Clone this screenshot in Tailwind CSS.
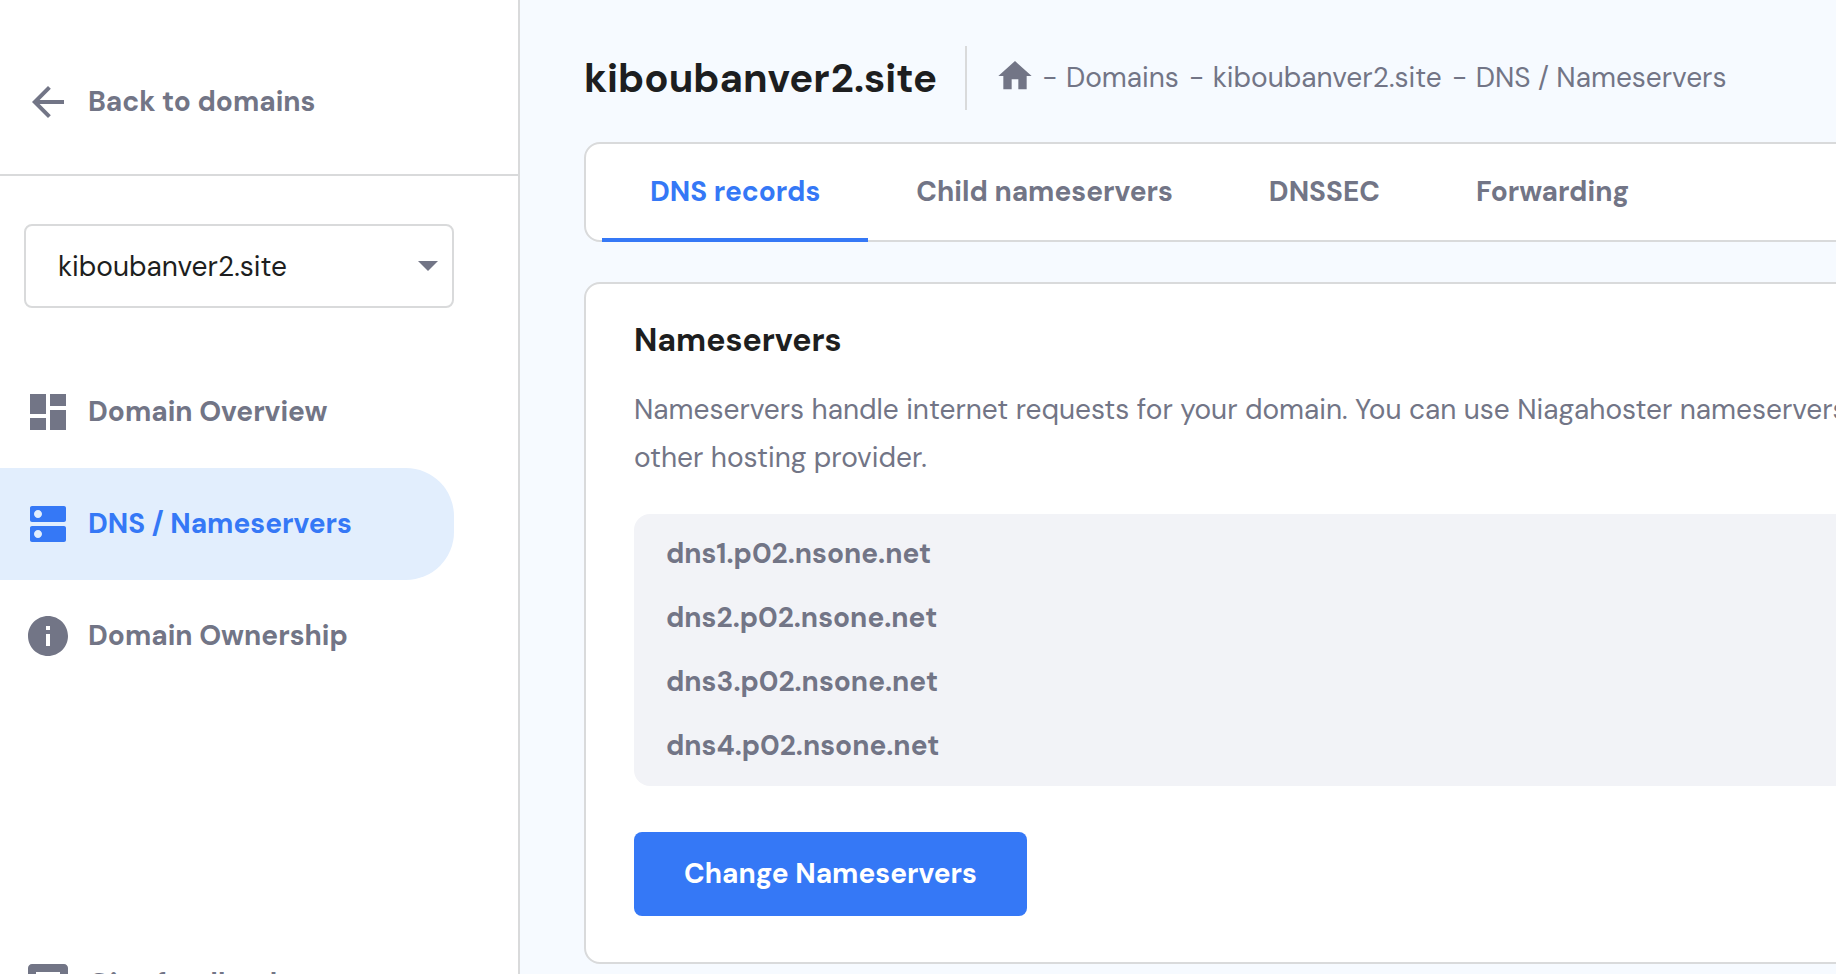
<!DOCTYPE html>
<html lang="en"><head><meta charset="utf-8"><title>DNS / Nameservers</title>
<script src="https://cdn.jsdelivr.net/npm/@tailwindcss/browser@4"></script></head>
<body class="h-[974px] w-[1836px] overflow-hidden bg-[#f6faff] text-[28px] leading-[48px] whitespace-nowrap text-[#727586]" style="font-family:'DM Sans','Open Sans','Noto Sans',sans-serif">
<div class="flex h-full">
<aside class="flex h-full w-[520px] shrink-0 flex-col overflow-hidden border-r-2 border-[#d9dadb] bg-white font-bold">
  <a class="flex h-[176px] shrink-0 items-center gap-4 border-b-2 border-[#d9dadb] pt-[30px] pl-6">
    <svg class="size-12" viewBox="0 0 24 24" fill="currentColor"><path d="M20 11H7.83l5.59-5.59L12 4l-8 8 8 8 1.41-1.41L7.83 13H20v-2z"/></svg>
    <span>Back to domains</span></a>
  <div class="mt-12 ml-6 flex h-[84px] w-[430px] shrink-0 items-center justify-between rounded-lg border-2 border-[#d9dadb] pr-[14px] pl-8 font-normal text-[#1d1e20]">
    <span class="pt-0.5">kiboubanver2.site</span>
    <svg class="h-[10px] w-5 text-[#727586]" viewBox="0 0 20 10" fill="currentColor"><path d="M0 0h20L10 10z"/></svg></div>
  <nav class="mt-12 w-[454px] shrink-0">
    <a class="flex h-28 items-center gap-4 pl-6"><svg class="size-12" viewBox="0 0 24 24" fill="currentColor"><path d="M3 13h8V3H3v10zm0 8h8v-6H3v6zm10 0h8V11h-8v10zm0-18v6h8V3h-8z"/></svg><span>Domain Overview</span></a>
    <a class="flex h-28 items-center gap-4 rounded-r-[48px] bg-[#e2eefd] pl-6 text-[#3578f6]"><svg class="size-12" viewBox="0 0 24 24" fill="currentColor"><path d="M20 13H4c-.55 0-1 .45-1 1v6c0 .55.45 1 1 1h16c.55 0 1-.45 1-1v-6c0-.55-.45-1-1-1zM7 19c-1.100 0-2-.9-2-2s.9-2 2-2 2 .9 2 2-.9 2-2 2zM20 3H4c-.55 0-1 .45-1 1v6c0 .55.45 1 1 1h16c.55 0 1-.45 1-1V4c0-.55-.45-1-1-1zM7 9c-1.100 0-2-.9-2-2s.9-2 2-2 2 .9 2 2-.9 2-2 2z"/></svg><span>DNS / Nameservers</span></a>
    <a class="flex h-28 items-center gap-4 pl-6"><svg class="size-12" viewBox="0 0 24 24" fill="currentColor"><path d="M12 2C6.480 2 2 6.480 2 12s4.480 10 10 10 10-4.480 10-10S17.520 2 12 2zm1 15h-2v-6h2v6zm0-8h-2V7h2v2z"/></svg><span>Domain Ownership</span></a>
  </nav>
  <a class="mt-[236px] flex h-28 shrink-0 items-center gap-4 pl-6"><svg class="size-12" viewBox="0 0 24 24" fill="currentColor"><path fill-rule="evenodd" d="M20 2H4c-1.100 0-2 .9-2 2v18l4-4h14c1.100 0 2-.9 2-2V4c0-1.100-.9-2-2-2zM6 6h12v8H6z"/></svg><span>Give feedback</span></a>
</aside>
<main class="w-[1316px] shrink-0 overflow-hidden pt-[46px] pl-16">
  <header class="flex h-16 items-center">
    <h1 class="w-[381px] text-[40px] font-bold text-[#1d1e20]">kiboubanver2.site</h1>
    <div class="h-16 w-0.5 bg-[#d9dadb]"></div>
    <nav class="ml-7 flex items-center gap-[10.3px]">
      <svg class="-mt-1 -mr-[3px] size-10" viewBox="0 0 24 24" fill="currentColor"><path d="M10 20v-6h4v6h5v-8h3L12 3 2 12h3v8z"/></svg>
      <span><span class="mr-px">- </span>Domains</span>
      <span><span class="mr-px">- </span>kiboubanver2.site</span>
      <span><span class="mr-px">- </span>DNS / Nameservers</span>
    </nav>
  </header>
  <div class="mt-8 flex h-[100px] w-[1600px] rounded-2xl border-2 border-[#d9dadb] bg-white pl-4 font-bold">
    <a class="-mb-0.5 flex items-center border-b-4 border-[#3578f6] px-12 pt-0.5 text-[#3578f6]">DNS records</a>
    <a class="flex items-center px-12">Child nameservers</a>
    <a class="flex items-center px-12">DNSSEC</a>
    <a class="flex items-center px-12">Forwarding</a>
  </div>
  <section class="mt-10 h-[682px] w-[1600px] rounded-2xl border-2 border-[#d9dadb] bg-white px-12 pt-8">
    <h2 class="text-[32px] font-bold text-[#1d1e20]">Nameservers</h2>
    <p class="mt-[22px]">Nameservers handle internet requests for your domain. You can use Niagahoster nameservers<br>other hosting provider.</p>
    <ul class="mt-8 rounded-2xl bg-[#f2f3f7] px-8 py-2 leading-[64px] font-bold">
      <li>dns1.p02.nsone.net</li><li>dns2.p02.nsone.net</li><li>dns3.p02.nsone.net</li><li>dns4.p02.nsone.net</li>
    </ul>
    <button class="mt-[46px] flex h-[84px] w-[393px] items-center justify-center rounded-lg bg-[#3578f6] font-bold text-white">Change Nameservers</button>
  </section>
</main>
</div></body></html>
